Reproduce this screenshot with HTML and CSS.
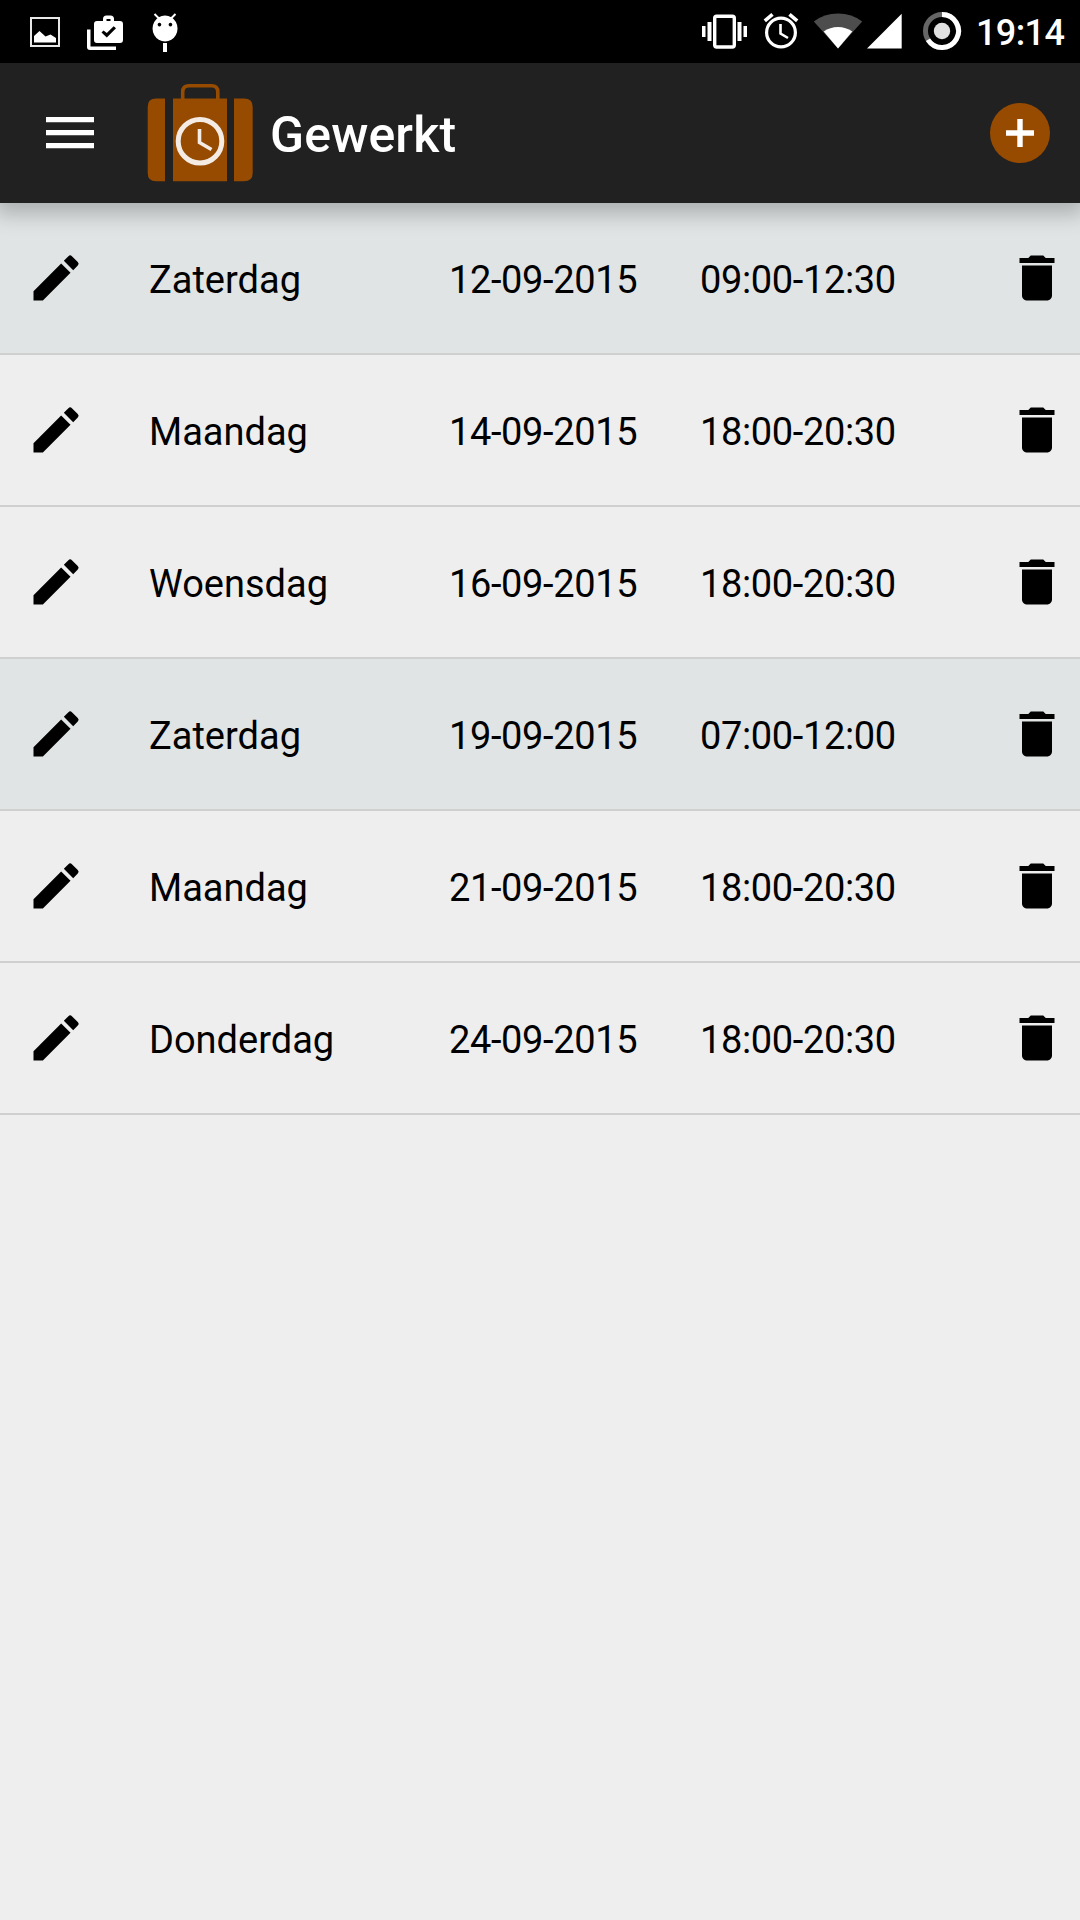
FILE: index.html
```html
<!DOCTYPE html>
<html lang="nl">
<head>
<meta charset="utf-8">
<title>Gewerkt</title>
<link rel="stylesheet" href="styles.css">
</head>
<body>
<svg class="defs" width="0" height="0" aria-hidden="true">
  <symbol id="pencil" viewBox="0 0 24 24"><path d="M3 17.25V21h3.75L17.81 9.94l-3.75-3.75L3 17.25zM20.71 7.04a1 1 0 0 0 0-1.41l-2.34-2.34a1 1 0 0 0-1.41 0l-1.83 1.83 3.75 3.75 1.83-1.83z"/></symbol>
  <symbol id="trash" viewBox="0 0 24 24"><path d="M6 19c0 1.100.9 2 2 2h8c1.100 0 2-.9 2-2V7H6v12zM19 4h-3.500l-1-1h-5l-1 1H5v2h14V4z"/></symbol>
</svg>

<div class="status">
  <svg class="notifications" width="180" height="63" viewBox="0 0 180 63" fill="#fff">
    <rect x="31" y="18" width="28" height="28" fill="none" stroke="#e8e8e8" stroke-width="2"/>
    <path d="M34 42.500v-6.500l5.500-5 6 5.500 5-2 5.500 3.500v4.500z"/>
    <path d="M87 29.500h3.500V46.500H116V50H90q-3 0-3-3z"/>
    <path fill-rule="evenodd" d="M97 21h6v-2q0-3.500 3.500-3.500h4q3.500 0 3.500 3.500v2h6q3 0 3 3v16q0 3-3 3H97q-3 0-3-3V24q0-3 3-3zM106.500 21h4v-2h-4zM103.500 30.500 101.500 32.500 106.800 37.500 116 28.300 113.700 26.200 106.800 33z"/>
    <path fill-rule="evenodd" d="M165 15.500a12.500 13 0 1 0 .1 0zM159.500 22.800a1.800 1.800 0 1 1-.1 0zM170.500 22.800a1.800 1.800 0 1 1-.1 0z"/>
    <path d="M154.500 14l5 5M175.500 14l-5 5" stroke="#fff" stroke-width="2"/>
    <rect x="163" y="43" width="4" height="9"/>
  </svg>
  <div class="system">
    <svg width="270" height="63" viewBox="696 0 270 63" fill="#fff">
      <path d="M702 26h3.500v11H702zM707.500 22h4v19h-4zM737.500 22h4v19h-4zM743.500 26h3.500v11h-3.500z"/>
      <rect x="714.700" y="16.200" width="19.600" height="30.800" rx="2" fill="none" stroke="#fff" stroke-width="3.400"/>
      <g fill="none" stroke="#fff"><circle cx="781" cy="32.500" r="14.400" stroke-width="3.200"/><path d="M780.500 24v9.500l7.500 4.500" stroke-width="2.600"/><path d="M764.800 20.800l7.700-6.400M797.200 20.800l-7.700-6.400" stroke-width="3.600"/></g>
      <path d="M838 48.500 813.800 21.500Q824 13.500 838 13.500T862.200 21.500z" fill="#4d4d4d"/>
      <path d="M838 48.500 823.700 31.500Q830 27 838 27T852.300 31.500z"/>
      <path d="M867 48.500h34.700V13.700z"/>
      <circle cx="942" cy="31" r="16.500" fill="none" stroke="#666" stroke-width="5"/>
      <path d="M942 14.500A16.500 16.500 0 1 1 928 39.700" fill="none" stroke="#fff" stroke-width="5"/>
      <circle cx="942" cy="31" r="8.200" fill="#e0e0e0"/>
    </svg>
    <span class="clock">19:14</span>
  </div>
</div>

<header class="bar">
  <svg class="menu" width="48" height="34" viewBox="0 0 48 34" fill="#fff"><path d="M0 1h48v5.300H0zM0 14h48v5.300H0zM0 27h48v5.300H0z"/></svg>
  <svg class="logo" width="106" height="99" viewBox="147 83 106 99">
    <path fill="#964b00" d="M156 98.500h9v82.700h-9q-8.300 0-8.300-8.300v-66q0-8.400 8.300-8.400zM173 98.500h54v82.700h-54zM234 98.500h10q8.700 0 8.700 8.400v66q0 8.300-8.700 8.300h-10z"/>
    <path d="M182.700 99v-7q0-6.200 6.300-6.200h22.500q6.300 0 6.300 6.200v7" fill="none" stroke="#964b00" stroke-width="3.600"/>
    <g fill="none" stroke="#f3ebe4"><circle cx="200" cy="141.200" r="21.800" stroke-width="5"/><path d="M199.500 129v13.500l12 7" stroke-width="3.600"/></g>
  </svg>
  <h1 class="title">Gewerkt</h1>
  <svg class="add" width="60" height="60" viewBox="0 0 60 60"><circle cx="30" cy="30" r="30" fill="#964b00"/><path d="M27.300 16h5.400v11.300H44v5.400H32.700V44h-5.400V32.700H16v-5.400h11.300z" fill="#fff"/></svg>
</header>

<main class="list">
  <div class="row weekend"><svg class="icon"><use href="#pencil"/></svg><span>Zaterdag</span><span class="num">12-09-2015</span><span class="num">09:00-12:30</span><svg class="icon"><use href="#trash"/></svg></div>
  <div class="row"><svg class="icon"><use href="#pencil"/></svg><span>Maandag</span><span class="num">14-09-2015</span><span class="num">18:00-20:30</span><svg class="icon"><use href="#trash"/></svg></div>
  <div class="row"><svg class="icon"><use href="#pencil"/></svg><span>Woensdag</span><span class="num">16-09-2015</span><span class="num">18:00-20:30</span><svg class="icon"><use href="#trash"/></svg></div>
  <div class="row weekend"><svg class="icon"><use href="#pencil"/></svg><span>Zaterdag</span><span class="num">19-09-2015</span><span class="num">07:00-12:00</span><svg class="icon"><use href="#trash"/></svg></div>
  <div class="row"><svg class="icon"><use href="#pencil"/></svg><span>Maandag</span><span class="num">21-09-2015</span><span class="num">18:00-20:30</span><svg class="icon"><use href="#trash"/></svg></div>
  <div class="row"><svg class="icon"><use href="#pencil"/></svg><span>Donderdag</span><span class="num">24-09-2015</span><span class="num">18:00-20:30</span><svg class="icon"><use href="#trash"/></svg></div>
</main>
</body>
</html>
```
FILE: styles.css
```css
* { box-sizing: border-box; }
body {
  margin: 0;
  min-height: 1920px;
  background: #eee;
  color: #000;
  font-family: Roboto, sans-serif;
  overflow-x: hidden;
}
svg { display: block; flex: none; }
.defs { position: absolute; }
.status {
  position: relative;
  z-index: 2;
  display: flex;
  justify-content: space-between;
  height: 63px;
  background: #000;
  color: #fff;
}
.system { display: flex; width: 384px; }
.clock {
  padding-left: 10px;
  font-size: 36px;
  font-weight: 500;
  letter-spacing: -0.6px;
  line-height: 66px;
  white-space: nowrap;
}
.bar {
  position: relative;
  z-index: 1;
  display: flex;
  align-items: center;
  height: 140px;
  padding: 0 30px 0 46px;
  background: #212121;
  box-shadow: 0 6px 20px 5px rgba(0, 0, 0, 0.23);
}
.logo { margin: 0 0 2px 53px; }
.title {
  margin: 3px auto 0 17px;
  color: #fff;
  font-size: 50px;
  font-weight: 500;
  letter-spacing: 0.15px;
  line-height: 60px;
}
.row {
  display: grid;
  grid-template-columns: 123px 300px 251px 307px 60px;
  align-items: center;
  height: 152px;
  padding-left: 26px;
  border-bottom: 2px solid #cfcfcf;
  font-size: 38px;
  line-height: 46px;
}
.row span { padding-top: 4px; }
.num { letter-spacing: -0.37px; }
.weekend { background: #e0e4e4; }
.icon { width: 60px; height: 60px; }
```
